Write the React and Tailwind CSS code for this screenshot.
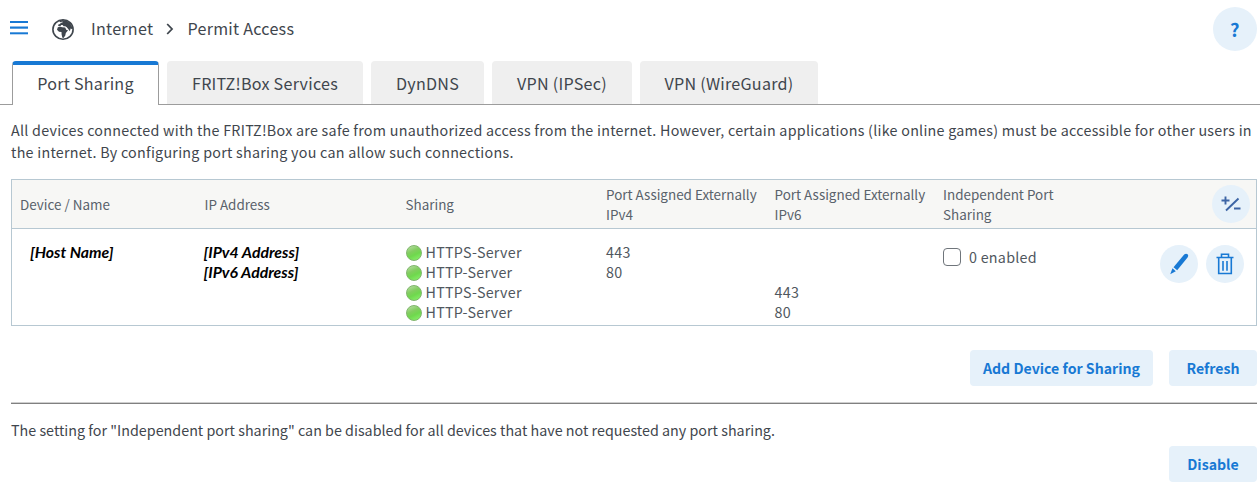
const TABS = [
  { label: "FRITZ!Box Services", width: "w-[196px]" },
  { label: "DynDNS", width: "w-[113px]" },
  { label: "VPN (IPSec)", width: "w-[140px]" },
  { label: "VPN (WireGuard)", width: "w-[178px]" },
];

const SHARES = [
  { name: "HTTPS-Server", v4: "443", v6: "" },
  { name: "HTTP-Server", v4: "80", v6: "" },
  { name: "HTTPS-Server", v4: "", v6: "443" },
  { name: "HTTP-Server", v4: "", v6: "80" },
];

const COLUMNS = "grid grid-cols-[184.5px_201px_200.5px_168.5px_168.5px_1fr] pl-2";

function MenuIcon() {
  return (
    <svg className="mt-[21px] h-[14px] w-[18px]" viewBox="0 0 18 14" fill="#1879d4">
      <rect width="18" height="2" />
      <rect y="5.5" width="18" height="2.2" />
      <rect y="11.3" width="18" height="2" />
    </svg>
  );
}

function GlobeIcon() {
  return (
    <svg className="mt-[19px] ml-6 h-[21px] w-[22px]" viewBox="0 0 22 21" fill="#3f464d">
      <ellipse cx="11" cy="10.5" rx="10.1" ry="9.7" fill="none" stroke="#3f464d" strokeWidth="1.6" />
      <path d="M7 2.6 10.2 1 14 1.4 18 4 20.2 8 20.3 10.2 18.6 9.5 17.9 12.2 16 9.8 14.8 8.2 13.3 7.3 11.6 7.3 10.6 6.1 9.3 5.9 8.2 7.2 6.2 7.1 6.3 5.6 8 5 8.7 3.9 10.8 3.3 10.3 2.5 8.6 3.3Z" />
      <path d="M5.8 8.3 8.2 7.7 10.1 8.3 13.1 8.5 14.5 11 16.1 11.3 13.8 14.1 13.3 16.4 11.5 18.9 10.4 18.7 9.6 15.5 9.5 12.9 7 12.7 5 10.8Z" />
    </svg>
  );
}

function StatusLight() {
  return (
    <span className="mt-px block h-4 w-4 rounded-full border border-[#80b66c] bg-[linear-gradient(155deg,#b4dda0_5%,#83cd60_38%,#6fd84d_60%,#8cf26f_100%)]" />
  );
}

function RoundButton({ children, className }) {
  return (
    <button className={`flex h-[38px] w-[38px] items-center justify-center rounded-full bg-[#e6f1fa] ${className ?? ""}`}>
      {children}
    </button>
  );
}

function ActionButton({ children, className }) {
  return (
    <button className={`h-9 rounded bg-[#e6f1fa] text-[14.15px] leading-[36px] font-bold tracking-normal text-[#1879d4] ${className}`}>
      {children}
    </button>
  );
}

export default function App() {
  return (
    <div className="h-[490px] w-[1260px] overflow-hidden bg-white font-['Noto_Sans_CJK_SC','Noto_Sans',sans-serif] text-[14.3px] leading-5 tracking-[0.26px] text-[#3f464d]">
      <header className="flex h-[61px] pl-[10px] text-[16.1px]">
        <MenuIcon />
        <GlobeIcon />
        <span className="mt-[17px] ml-[17px] w-[75px] leading-[22px]">Internet</span>
        <svg className="mt-[23px] h-[12px] w-[8px]" viewBox="0 0 8 12" fill="none" stroke="#3f464d" strokeWidth="1.8">
          <path d="M1.2 1 6 6 1.2 11" />
        </svg>
        <span className="mt-[17px] ml-[13.5px] leading-[22px]">Permit Access</span>
        <button className="mt-[7px] mr-[3px] ml-auto flex h-11 w-11 items-center justify-center rounded-full bg-[#e6f1fa] text-[18.5px] font-bold text-[#1879d4]">
          ?
        </button>
      </header>

      <nav className="flex h-11 text-[16.1px] leading-[44px]">
        <span className="w-3 border-b border-[#9c9c9c]" />
        <a className="w-[147px] rounded-t border-x border-t-4 border-x-[#9c9c9c] border-t-[#1879d4] text-center leading-[36px]">
          Port Sharing
        </a>
        {TABS.map((tab) => (
          <div key={tab.label} className="border-b border-[#9c9c9c] pl-2">
            <a className={`block h-[43px] rounded-t bg-[#efefef] text-center ${tab.width}`}>{tab.label}</a>
          </div>
        ))}
        <span className="flex-1 border-b border-[#9c9c9c]" />
      </nav>

      <main className="mr-[3px] ml-[11px]">
        <p className="pt-[14px] leading-[22px] whitespace-nowrap">
          All devices connected with the FRITZ!Box are safe from unauthorized access from the internet. However, certain applications (like online games) must be accessible for other users in
          <br />
          the internet. By configuring port sharing you can allow such connections.
        </p>

        <section className="mt-4 h-[147px] border border-[#b7c8d2] text-[#50575e]">
          <div className={`${COLUMNS} h-[49px] items-center border-b border-[#b7c8d2] bg-[#f7f7f5] text-[13.45px] tracking-normal text-[#59626b]`}>
            <span>Device / Name</span>
            <span>IP Address</span>
            <span>Sharing</span>
            <span className="whitespace-nowrap">Port Assigned Externally<br />IPv4</span>
            <span className="whitespace-nowrap">Port Assigned Externally<br />IPv6</span>
            <div className="flex items-center justify-between pr-[6px]">
              <span>Independent Port<br />Sharing</span>
              <RoundButton>
                <svg className="h-5 w-5" viewBox="0 0 20 20" fill="none" stroke="#3d65a5" strokeWidth="1.9">
                  <path d="M.5 6.5H8.5M4.5 2.5v8M5 16.5 17.5 4.5M13 14.5h6.5" />
                </svg>
              </RoundButton>
            </div>
          </div>

          <div className={`${COLUMNS} pt-[13px]`}>
            <div className="pl-[10px] font-['Lato',sans-serif] text-[15.8px] font-bold tracking-normal text-black italic">[Host Name]</div>
            <div className="-ml-px font-['Lato',sans-serif] text-[15.8px] font-bold tracking-normal text-black italic">
              [IPv4 Address]
              <br />
              [IPv6 Address]
            </div>
            <div>
              {SHARES.map((share, i) => (
                <div key={i} className="flex h-5 items-center gap-1">
                  <StatusLight />
                  {share.name}
                </div>
              ))}
            </div>
            <div>{SHARES.map((share, i) => <div key={i} className="h-5">{share.v4}</div>)}</div>
            <div>{SHARES.map((share, i) => <div key={i} className="h-5">{share.v6}</div>)}</div>
            <div className="flex items-start pr-3">
              <span className="mt-[6px] h-[18px] w-[18px] rounded border-[1.5px] border-[#6f757b]" />
              <span className="mt-[5px] ml-2">0 enabled</span>
              <RoundButton className="mt-[3px] mr-2 ml-auto">
                <svg className="h-[22px] w-[20px]" viewBox="0 0 20 22" fill="#1879d4">
                  <path d="M15.2 1.6Q17-.1 18.6 1.3 19.8 2.8 18.5 4.5L8.2 17.3 4.5 14.2Z" />
                  <path d="M3.5 15.3 6.8 18.2 1.2 21.2Z" />
                </svg>
              </RoundButton>
              <RoundButton className="mt-[3px]">
                <svg className="h-[22px] w-[18px]" viewBox="0 0 18 22" fill="none" stroke="#1879d4" strokeWidth="1.6">
                  <path d="M.5 4.5h17M5.5 4V1.2h7V4M2.7 4.5V20.5h12.6V4.5M7 8v9.7M11 8v9.7" />
                </svg>
              </RoundButton>
            </div>
          </div>
        </section>

        <div className="mt-6 flex justify-end gap-4">
          <ActionButton className="w-[183px]">Add Device for Sharing</ActionButton>
          <ActionButton className="w-[88px]">Refresh</ActionButton>
        </div>
        <div className="mt-4 h-[2px] border-t border-b border-t-[#cfcfcf] border-b-[#808080]" />
        <p className="mt-4 tracking-[0.01px]">
          The setting for "Independent port sharing" can be disabled for all devices that have not requested any port sharing.
        </p>
        <div className="mt-[6px] flex justify-end">
          <ActionButton className="w-[88px]">Disable</ActionButton>
        </div>
      </main>
    </div>
  );
}
